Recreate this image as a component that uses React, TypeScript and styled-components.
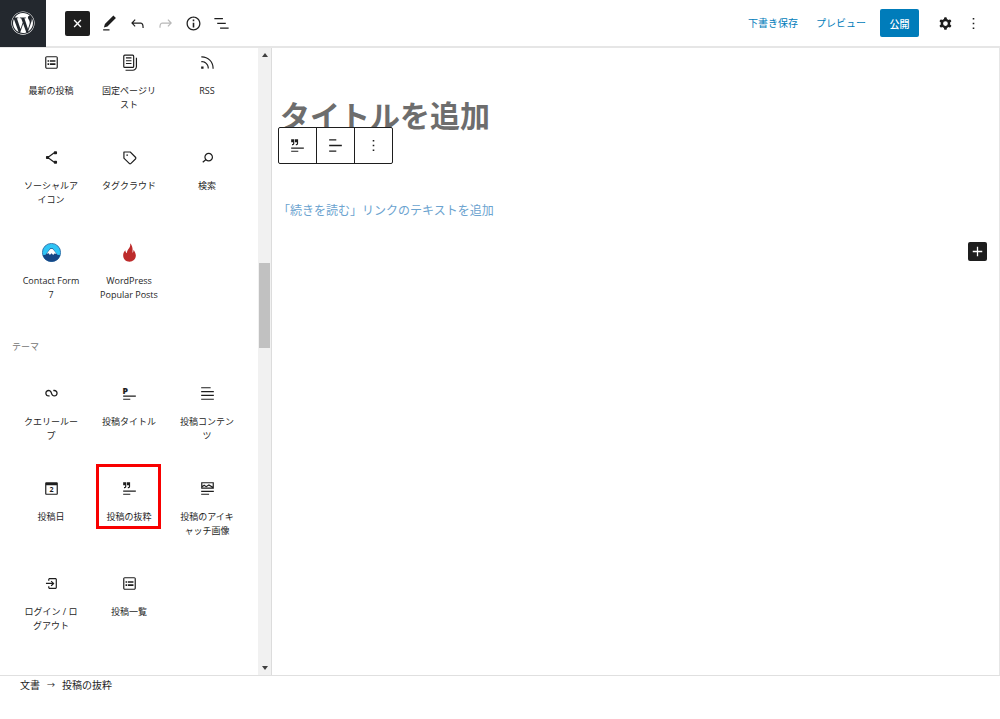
import React from "react";
import styled, { createGlobalStyle, css } from "styled-components";
import { FaWordpress } from "react-icons/fa6";

const ink = "#1e1e1e";
const blue = "#007cba";
const line = "#e6e6e6";

const GlobalStyle = createGlobalStyle`
  *, *::before, *::after { box-sizing: border-box; }
  body {
    margin: 0;
    background: #fff;
    color: ${ink};
    font-family: "Open Sans", "Noto Sans CJK JP", sans-serif;
    font-size: 10px;
  }
  button, input { font: inherit; color: inherit; }
  button { padding: 0; border: 0; background: none; cursor: pointer; }
  svg { display: block; flex: none; }
`;

const Page = styled.div`
  display: flex;
  flex-direction: column;
  min-height: 100vh;
`;

const Header = styled.header`
  display: flex;
  align-items: center;
  justify-content: space-between;
  height: 48px;
  padding-right: 13px;
  border-bottom: 2px solid ${line};
`;

const HeaderGroup = styled.div`
  display: flex;
  align-items: center;
`;

const LogoLink = styled.a`
  display: grid;
  place-items: center;
  width: 46px;
  height: 48px;
  margin-right: 19px;
  background: #23282e;
  color: #fff;
`;

const SquareButton = styled.button<{ $size: number }>`
  display: grid;
  place-items: center;
  width: ${(p) => p.$size}px;
  height: ${(p) => p.$size}px;
  border-radius: 2px;
  background: ${ink};
  color: #fff;
`;

const ToolButton = styled.button`
  display: grid;
  place-items: center;
  width: 28px;
  height: 28px;
  &:disabled { color: #b8b8b8; cursor: default; }
`;

const Tools = styled.div`
  display: flex;
  margin-left: 5px;
`;

const TextButton = styled.button`
  margin-right: 18px;
  color: ${blue};
  line-height: 28px;
`;

const PublishButton = styled.button`
  width: 39px;
  height: 28px;
  margin: 0 12px 0 -4px;
  border-radius: 2px;
  background: ${blue};
  color: #fff;
  font-weight: 500;
`;

const Workspace = styled.div`
  display: flex;
  flex: 1;
`;

const Sidebar = styled.aside`
  display: flex;
  flex: none;
  width: 272px;
  border-right: 1px solid #dcdcdc;
`;

const Library = styled.div`
  flex: 1;
  padding: 0 12px 10px;
`;

const BlockGrid = styled.div`
  display: grid;
  grid-template-columns: repeat(3, 78px);
  grid-auto-rows: 95px;
`;

const GroupHeading = styled.h2`
  margin: 7px 0 25px;
  color: #757575;
  font-size: 9px;
  font-weight: 400;
  line-height: 14px;
`;

const BlockButton = styled.button<{ $marked?: boolean }>`
  position: relative;
  display: flex;
  flex-direction: column;
  align-items: center;
  gap: 12px;
  padding: 5px 9px 0;
  font-size: 9px;
  line-height: 14px;
  line-break: loose;
  ${(p) =>
    p.$marked &&
    css`
      &::after {
        content: "";
        position: absolute;
        top: -10px;
        left: 6px;
        width: 65px;
        height: 65px;
        border: 3px solid #f80000;
      }
    `}
`;

const ScrollTrack = styled.div`
  display: grid;
  grid-template-rows: 14px 201fr 85px 312fr 14px;
  justify-items: center;
  align-items: center;
  width: 13px;
  background: #f1f1f1;
`;

const ScrollThumb = styled.div`
  grid-row: 3;
  width: 11px;
  height: 100%;
  background: #c1c1c1;
`;

const ScrollArrow = styled.svg<{ $row: number }>`
  grid-row: ${(p) => p.$row};
`;

const Canvas = styled.main`
  display: flex;
  flex: 1;
  flex-direction: column;
  align-items: flex-start;
  min-width: 0;
  padding: 46px 12px 0 6px;
  border-right: 1px solid ${line};
`;

const TitleInput = styled.input`
  width: 100%;
  height: 44px;
  padding: 0 2px;
  border: 0;
  outline: 0;
  background: none;
  font-size: 30px;
  font-weight: 700;
  line-height: 44px;
  &::placeholder { color: #6d6d6d; opacity: 1; }
`;

const BlockToolbar = styled.div`
  position: relative;
  display: flex;
  height: 37px;
  margin-top: -11px;
  border: 1px solid ${ink};
  border-radius: 2px;
  background: #fff;
`;

const ToolbarButton = styled.button`
  display: grid;
  place-items: center;
  width: 38px;
  & + & { border-left: 1px solid ${ink}; }
  &:first-child { width: 37px; }
`;

const MoreLink = styled.a`
  margin-top: 37px;
  color: #6ba3cf;
  font-size: 12px;
  line-height: 20px;
  text-decoration: none;
`;

const InserterRow = styled.div`
  display: flex;
  align-self: flex-end;
  margin-top: 21px;
`;

const Footer = styled.footer`
  height: 44px;
  padding: 0 20px;
  border-top: 1px solid #e0e0e0;
  line-height: 18px;
`;

const Crumbs = styled.nav`
  display: flex;
  align-items: center;
  gap: 7px;
`;

const CrumbArrow = styled.span`
  font-size: 8px;
`;

const paths = {
  edit: "M20.1 5.1L16.900 2 6.200 12.700l-1.300 4.400 4.500-1.300 10.700-10.700zM4 20.800h8v-1.500H4v1.500z",
  undo: "M18.3 11.7c-.6-.6-1.4-.9-2.3-.9H6.7l2.9-3.3-1.1-1-4.5 5L8.5 16l1-1-2.7-2.7H16c.5 0 .9.2 1.3.5 1 1 1 3.4 1 4.5v.3h1.5v-.2c0-1.5 0-4.3-1.5-5.7z",
  redo: "M15.6 6.5l-1.1 1 2.9 3.3H8c-.9 0-1.7.3-2.3.9-1.4 1.5-1.4 4.2-1.4 5.6v.2h1.5v-.3c0-1.1 0-3.5 1-4.5.3-.3.7-.5 1.3-.5h9.2L14.5 15l1.1 1.1 4.6-4.6-4.6-5z",
  info: "M12 3.2c-4.8 0-8.8 3.9-8.8 8.8 0 4.8 3.9 8.8 8.8 8.8 4.8 0 8.8-3.9 8.8-8.8 0-4.8-4-8.8-8.8-8.8zm0 16c-4 0-7.2-3.3-7.2-7.2C4.8 8 8 4.8 12 4.8s7.2 3.3 7.2 7.2c0 4-3.2 7.2-7.2 7.2zM11 17h2v-6h-2v6zm0-8h2V7h-2v2z",
  listView: "M13.8 5.2H3v1.5h10.8V5.2zm-3.6 12v1.5H21v-1.5H10.2zm7.2-6H6.6v1.5h10.8v-1.5z",
  close: "M5.600 3.500L12 9.900l6.400-6.400 2.100 2.100L14.100 12l6.400 6.400-2.100 2.100L12 14.100l-6.400 6.400-2.100-2.100L9.900 12 3.500 5.600z",
  plus: "M18 11.2h-5.2V6h-1.6v5.2H6v1.6h5.2V18h1.6v-5.2H18z",
  cog: "M10.289 4.836A1 1 0 0111.275 4h1.306a1 1 0 01.987.836l.244 1.466c.787.26 1.503.679 2.108 1.218l1.393-.522a1 1 0 011.216.437l.653 1.13a1 1 0 01-.23 1.273l-1.148.944a6.025 6.025 0 010 2.435l1.149.946a1 1 0 01.23 1.272l-.653 1.13a1 1 0 01-1.216.437l-1.394-.522c-.605.54-1.32.958-2.108 1.218l-.244 1.466a1 1 0 01-.987.836h-1.306a1 1 0 01-.986-.836l-.244-1.466a5.995 5.995 0 01-2.108-1.218l-1.394.522a1 1 0 01-1.217-.436l-.653-1.131a1 1 0 01.23-1.272l1.149-.946a6.026 6.026 0 010-2.435l-1.148-.944a1 1 0 01-.23-1.272l.653-1.131a1 1 0 011.217-.437l1.393.522a5.994 5.994 0 012.108-1.218l.244-1.466zM14.929 12a3 3 0 11-6 0 3 3 0 016 0z",
  more: "M13 19h-2v-2h2v2zm0-6h-2v-2h2v2zm0-6h-2V5h2v2z",
  align: "M4 4.2h9v1.6H4zM4 11.2h16v1.6H4zM4 18.2h9v1.6H4z",
  postList: "M18 4H6c-1.1 0-2 .9-2 2v12c0 1.1.9 2 2 2h12c1.1 0 2-.9 2-2V6c0-1.1-.9-2-2-2zm.5 14c0 .3-.2.5-.5.5H6c-.3 0-.5-.2-.5-.5V6c0-.3.2-.5.5-.5h12c.3 0 .5.2.5.5v12zM7 11h2V9H7v2zm0 4h2v-2H7v2zm3-4h7V9h-7v2zm0 4h7v-2h-7v2z",
  pages: "M14.5 5.5h-7V7h7V5.5zM7.5 9h7v1.5h-7V9zm7 3.5h-7V14h7v-1.5zM16 2H6a2 2 0 00-2 2v13a2 2 0 002 2h10a2 2 0 002-2V4a2 2 0 00-2-2zM6 3.5h10a.5.5 0 01.5.5v13a.5.5 0 01-.5.5H6a.5.5 0 01-.5-.5V4a.5.5 0 01.5-.5zM20 6v11c0 2.2-1.8 4-4 4H7v1.5h9c3 0 5.5-2.5 5.5-5.5V6H20z",
  rss: "M5 10.2h-.8v1.5H5c1.9 0 3.8.8 5.1 2.1 1.4 1.4 2.1 3.2 2.1 5.1v.8h1.5V19c0-2.3-.9-4.5-2.6-6.2-1.6-1.6-3.8-2.6-6.1-2.6zm10.4-1.6C12.6 5.8 8.9 4.2 5 4.2h-.8v1.5H5c3.5 0 6.9 1.4 9.4 3.9s3.9 5.8 3.9 9.4v.8h1.5V19c0-3.9-1.6-7.6-4.4-10.4zM4 20h3v-3H4v3z",
  share: "M9 11.8l6.1-4.5c.1.4.4.7.9.7h2c.6 0 1-.4 1-1V5c0-.6-.4-1-1-1h-2c-.6 0-1 .4-1 1v.4l-6.4 4.8c-.2-.1-.4-.2-.6-.2H6c-.6 0-1 .4-1 1v2c0 .6.4 1 1 1h2c.2 0 .4-.1.6-.2l6.4 4.8v.4c0 .6.4 1 1 1h2c.6 0 1-.4 1-1v-2c0-.6-.4-1-1-1h-2c-.5 0-.8.3-.9.7L9 12.2v-.4z",
  tag: "M20.1 11.2l-6.7-6.7c-.1-.1-.3-.2-.5-.2H5c-.4-.1-.8.3-.8.7v7.8c0 .2.1.4.2.5l6.7 6.7c.2.2.5.4.7.5s.6.2.9.2c.3 0 .6-.1.9-.2.3-.1.5-.3.8-.5l5.6-5.6c.4-.4.7-1 .7-1.6.1-.6-.2-1.2-.6-1.6zM19 13.4L13.4 19c-.1.1-.2.1-.3.2-.2.1-.4.1-.6 0-.1 0-.2-.1-.3-.2l-6.5-6.5V5.8h6.8l6.5 6.5c.2.2.2.4.2.6 0 .1 0 .3-.2.5zM9 8c-.6 0-1 .4-1 1s.4 1 1 1 1-.4 1-1-.4-1-1-1z",
  search: "M13.5 6C10.5 6 8 8.5 8 11.5c0 1.1.3 2.1.9 3l-3.4 3 1 1.1 3.4-2.9c1 .9 2.2 1.4 3.6 1.4 3 0 5.5-2.5 5.5-5.5C19 8.5 16.5 6 13.5 6zm0 9.5c-2.2 0-4-1.8-4-4s1.8-4 4-4 4 1.8 4 4-1.8 4-4 4z",
  loop: "M18.1823 11.6392C18.1823 13.0804 17.0139 14.2487 15.5727 14.2487C14.3579 14.2487 13.335 13.4179 13.0453 12.2922L13.0377 12.2625L13.0278 12.2335L12.3985 10.377L12.3942 10.3785C11.8571 8.64997 10.246 7.39405 8.33961 7.39405C5.99509 7.39405 4.09448 9.29465 4.09448 11.6392C4.09448 13.9837 5.99509 15.8843 8.33961 15.8843C8.88499 15.8843 9.40822 15.781 9.88943 15.5923L9.29212 14.0697C8.99812 14.185 8.67729 14.2487 8.33961 14.2487C6.89838 14.2487 5.73003 13.0804 5.73003 11.6392C5.73003 10.1979 6.89838 9.02959 8.33961 9.02959C9.55444 9.02959 10.5773 9.86046 10.867 10.9862L10.8772 10.9836L11.4695 12.7311C11.9515 14.546 13.6048 15.8843 15.5727 15.8843C17.9172 15.8843 19.8178 13.9837 19.8178 11.6392C19.8178 9.29465 17.9172 7.39404 15.5727 7.39404C15.0287 7.39404 14.5066 7.4968 14.0264 7.6847L14.6223 9.20781C14.9158 9.093 15.2358 9.02959 15.5727 9.02959C17.0139 9.02959 18.1823 10.1979 18.1823 11.6392Z",
  content: "M4 20h16v-1.5H4V20zm0-4.8h16v-1.5H4v1.5zm0-6.4v1.5h16V8.8H4zM16 4H4v1.5h12V4z",
  excerpt: "M12.75 9.33c0 .52-.1.98-.33 1.36-.23.38-.55.62-.89.77-.54.23-1.18.23-1.66.22v-1.5c.5 0 .83.01 1.07-.1a.4.4 0 00.2-.16c.05-.09.11-.26.11-.59V8H8.8V4h3.95v5.33zM7.95 9.33c0 .52-.1.98-.33 1.36-.23.38-.55.62-.89.77-.54.23-1.18.23-1.66.22v-1.5c.5 0 .83.01 1.07-.1a.4.4 0 00.2-.16c.05-.09.11-.26.11-.59V8H4V4h3.95v5.33zM13 20H4v-1.5h9V20zM20 16H4v-1.5h16V16z",
  titleLines: "M4 14.5h16V16H4zM4 18.5h9V20H4z",
  calendar: "M18.500 4h-13C4.700 4 4 4.700 4 5.500v13c0 .8.7 1.500 1.500 1.500h13c.8 0 1.500-.7 1.500-1.500v-13c0-.8-.7-1.500-1.500-1.500zm0 14.500h-13V8h13v10.500z",
  featured: "M4 4h16v8.200H4V4zm1.500 1.500v3l2.300-1.600 2.500 1.800 3.500-2 4.700 2.800v-4h-13zm0 4.900v.4h12.200l-4-2.400-3.400 2-2.500-1.700-2.300 1.700zM4 14.800h16v1.500H4zM4 18.500h10V20H4z",
  login: "M11 14.5l1.1 1.1 3-3 .5-.5-.6-.6-3-3-1 1 1.7 1.7H5v1.5h7.7L11 14.5zM16.8 5h-7c-1.1 0-2 .9-2 2v1.5h1.5V7c0-.3.2-.5.5-.5h7c.3 0 .5.2.5.5v10c0 .3-.2.5-.5.5h-7c-.3 0-.5-.2-.5-.5v-1.5H7.8V17c0 1.1.9 2 2 2h7c1.1 0 2-.9 2-2V7c0-1.1-.9-2-2-2z",
};

type IconName = keyof typeof paths;

function Icon({ name, size = 19, children }: { name: IconName; size?: number; children?: React.ReactNode }) {
  return (
    <svg width={size} height={size} viewBox="0 0 24 24" fill="currentColor" aria-hidden="true">
      <path d={paths[name]} fillRule="evenodd" />
      {children}
    </svg>
  );
}

const PostTitleIcon = () => (
  <Icon name="titleLines">
    <text x="3" y="12" fontSize="11" fontWeight="800">P</text>
  </Icon>
);

const PostDateIcon = () => (
  <Icon name="calendar">
    <text x="12" y="17" fontSize="9" fontWeight="700" textAnchor="middle">2</text>
  </Icon>
);

const MountainIcon = () => (
  <svg width="19" height="19" viewBox="0 0 24 24" aria-hidden="true">
    <circle cx="12" cy="12" r="11.5" fill="#2fc4f5" stroke="#24619c" />
    <path d="M1 15.500l3.500-.8L10 7.200q2-1.800 4 0l5.400 7.500 3.600.8A11.500 11.500 0 011 15.500z" fill="#164786" />
    <path d="M5.800 13.600L10.200 8q1.800-1.500 3.600 0l4.500 5.700-2.500-.4-1.700 2-2-2.200-2.200 2.200-1.400-2.200z" fill="#fff" />
  </svg>
);

const FlameIcon = () => (
  <svg width="19" height="19" viewBox="0 0 24 24" aria-hidden="true">
    <path
      d="M12.7.3c.7 3-.3 5-2 7.300C9 10 8.500 11.500 9 13c-1.500-.7-2.200-2-2.200-3.700C4.700 11.500 4 13.500 4 15.800 4 20.500 7.500 23.600 12 23.600s8-3.200 8-7.700c0-3.200-1.500-5.400-3-7.500.2 1.900-.2 3.200-1.400 4.200C16.500 7.500 15.600 3 12.700.3z"
      fill="#bd2b2b"
    />
  </svg>
);

type Block = { label: string; icon: React.ReactNode; marked?: boolean };

const widgetBlocks: Block[] = [
  { label: "最新の投稿", icon: <Icon name="postList" /> },
  { label: "固定ページリスト", icon: <Icon name="pages" /> },
  { label: "RSS", icon: <Icon name="rss" /> },
  { label: "ソーシャルアイコン", icon: <Icon name="share" /> },
  { label: "タグクラウド", icon: <Icon name="tag" /> },
  { label: "検索", icon: <Icon name="search" /> },
  { label: "Contact Form 7", icon: <MountainIcon /> },
  { label: "WordPress Popular Posts", icon: <FlameIcon /> },
];

const themeBlocks: Block[] = [
  { label: "クエリーループ", icon: <Icon name="loop" /> },
  { label: "投稿タイトル", icon: <PostTitleIcon /> },
  { label: "投稿コンテンツ", icon: <Icon name="content" /> },
  { label: "投稿日", icon: <PostDateIcon /> },
  { label: "投稿の抜粋", icon: <Icon name="excerpt" />, marked: true },
  { label: "投稿のアイキャッチ画像", icon: <Icon name="featured" /> },
  { label: "ログイン / ログアウト", icon: <Icon name="login" /> },
  { label: "投稿一覧", icon: <Icon name="postList" /> },
];

const BlockList = ({ blocks }: { blocks: Block[] }) => (
  <BlockGrid>
    {blocks.map((b) => (
      <BlockButton key={b.label} type="button" $marked={b.marked}>
        {b.icon}
        <span>{b.label}</span>
      </BlockButton>
    ))}
  </BlockGrid>
);

export default function App() {
  return (
    <Page>
      <GlobalStyle />
      <Header>
        <HeaderGroup>
          <LogoLink href="#" aria-label="WordPress">
            <FaWordpress size={24} />
          </LogoLink>
          <SquareButton $size={25} type="button" aria-label="閉じる">
            <Icon name="close" size={11} />
          </SquareButton>
          <Tools>
            <ToolButton type="button" aria-label="ツール"><Icon name="edit" /></ToolButton>
            <ToolButton type="button" aria-label="元に戻す"><Icon name="undo" /></ToolButton>
            <ToolButton type="button" aria-label="やり直す" disabled><Icon name="redo" /></ToolButton>
            <ToolButton type="button" aria-label="詳細"><Icon name="info" /></ToolButton>
            <ToolButton type="button" aria-label="リスト表示"><Icon name="listView" /></ToolButton>
          </Tools>
        </HeaderGroup>
        <HeaderGroup>
          <TextButton type="button">下書き保存</TextButton>
          <TextButton type="button">プレビュー</TextButton>
          <PublishButton type="button">公開</PublishButton>
          <ToolButton type="button" aria-label="設定"><Icon name="cog" /></ToolButton>
          <ToolButton type="button" aria-label="オプション"><Icon name="more" /></ToolButton>
        </HeaderGroup>
      </Header>
      <Workspace>
        <Sidebar>
          <Library>
            <BlockList blocks={widgetBlocks} />
            <GroupHeading>テーマ</GroupHeading>
            <BlockList blocks={themeBlocks} />
          </Library>
          <ScrollTrack aria-hidden="true">
            <ScrollArrow $row={1} width="6" height="4" viewBox="0 0 6 4"><path d="M0 4l3-4 3 4z" fill="#404040" /></ScrollArrow>
            <ScrollThumb />
            <ScrollArrow $row={5} width="6" height="4" viewBox="0 0 6 4"><path d="M0 0l3 4 3-4z" fill="#404040" /></ScrollArrow>
          </ScrollTrack>
        </Sidebar>
        <Canvas>
          <TitleInput aria-label="タイトル" placeholder="タイトルを追加" />
          <BlockToolbar role="toolbar">
            <ToolbarButton type="button" aria-label="投稿の抜粋"><Icon name="excerpt" /></ToolbarButton>
            <ToolbarButton type="button" aria-label="配置"><Icon name="align" /></ToolbarButton>
            <ToolbarButton type="button" aria-label="オプション"><Icon name="more" /></ToolbarButton>
          </BlockToolbar>
          <MoreLink href="#">「続きを読む」リンクのテキストを追加</MoreLink>
          <InserterRow>
            <SquareButton $size={19} type="button" aria-label="ブロックを追加"><Icon name="plus" size={19} /></SquareButton>
          </InserterRow>
        </Canvas>
      </Workspace>
      <Footer>
        <Crumbs>
          <span>文書</span>
          <CrumbArrow>→</CrumbArrow>
          <span>投稿の抜粋</span>
        </Crumbs>
      </Footer>
    </Page>
  );
}
